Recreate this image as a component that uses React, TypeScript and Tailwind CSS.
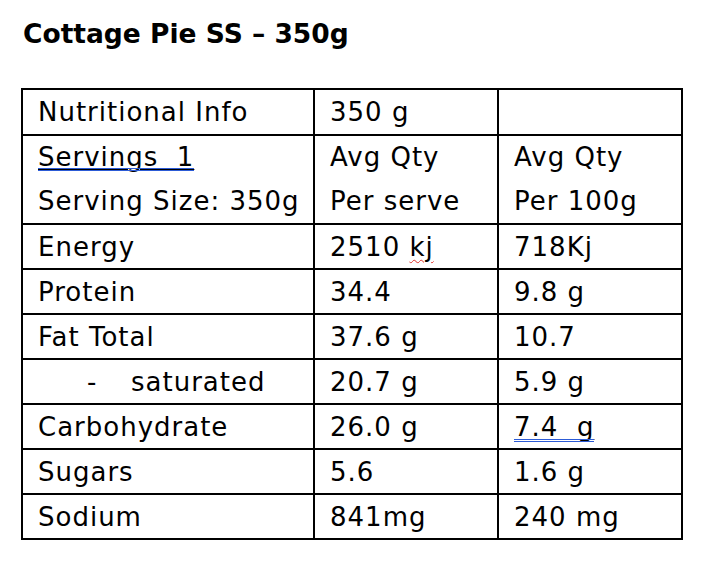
import type { ReactNode } from "react";

const rows: { label: ReactNode; serve: ReactNode; per100: ReactNode }[] = [
  {
    label: "Energy",
    serve: (
      <>
        2510{" "}
        <span className="underline decoration-wavy decoration-[#e0302a] decoration-1 underline-offset-[3px]">
          kj
        </span>
      </>
    ),
    per100: "718Kj",
  },
  { label: "Protein", serve: "34.4", per100: "9.8 g" },
  { label: "Fat Total", serve: "37.6 g", per100: "10.7" },
  {
    label: (
      <span className="flex">
        <span className="pl-[49px] w-[93px]">-</span>
        <span>saturated</span>
      </span>
    ),
    serve: "20.7 g",
    per100: "5.9 g",
  },
  {
    label: "Carbohydrate",
    serve: "26.0 g",
    per100: (
      <span className="relative inline-block underline decoration-1 underline-offset-[3px]">
        7.4&nbsp;&nbsp;g
        <span className="absolute left-0 right-0 top-[32px] border-b-[3px] border-double border-[#2c5bd6]" />
      </span>
    ),
  },
  { label: "Sugars", serve: "5.6", per100: "1.6 g" },
  { label: "Sodium", serve: "841mg", per100: "240 mg" },
];

const cell = "border-2 border-black pl-[15px] align-middle leading-[40px]";
const tall = "border-2 border-black pl-[15px] align-middle leading-[43.5px]";

export default function App() {
  return (
    <div className="w-[718px] h-[570px] bg-white text-black font-['DejaVu_Sans',sans-serif]">
      <h1 className="pl-[23px] pt-[17px] text-[26.5px] font-bold leading-[34px]">
        Cottage Pie SS – 350g
      </h1>

      <table className="ml-[21px] mt-[37px] w-[660px] border-collapse table-fixed text-[26px] tracking-[1px]">
        <colgroup>
          <col className="w-[292px]" />
          <col className="w-[184px]" />
          <col className="w-[184px]" />
        </colgroup>
        <tbody>
          <tr className="h-[46px]">
            <td className={cell}>Nutritional Info</td>
            <td className={cell}>350 g</td>
            <td className={cell}></td>
          </tr>
          <tr className="h-[89px]">
            <td className={tall}>
              <div>
                <span className="relative inline-block underline decoration-1 underline-offset-[3px]">
                  Servings&nbsp;&nbsp;1
                  <span className="absolute left-0 right-0 top-[32px] border-b-[3px] border-double border-[#2c5bd6]" />
                </span>
              </div>
              <div>Serving Size: 350g</div>
            </td>
            <td className={tall}>
              <div>Avg Qty</div>
              <div>Per serve</div>
            </td>
            <td className={tall}>
              <div>Avg Qty</div>
              <div>Per 100g</div>
            </td>
          </tr>
          {rows.map((r, i) => (
            <tr key={i} className="h-[45px]">
              <td className={cell}>{r.label}</td>
              <td className={cell}>{r.serve}</td>
              <td className={cell}>{r.per100}</td>
            </tr>
          ))}
        </tbody>
      </table>
    </div>
  );
}
